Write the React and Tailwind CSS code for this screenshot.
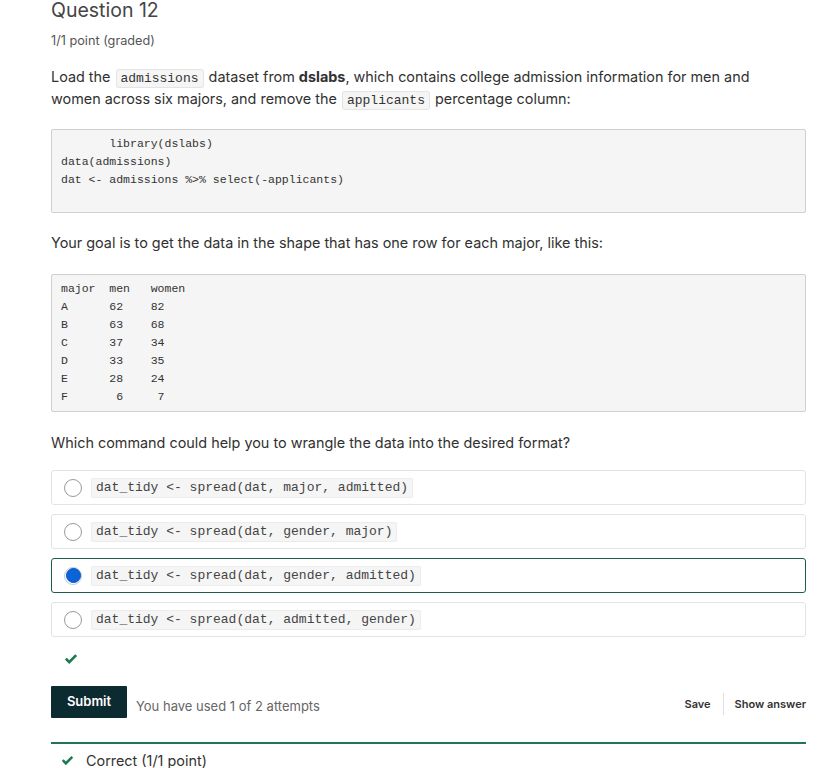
import React from 'react';

const mono = { fontFamily: '"Liberation Mono", "Courier New", monospace' };

const options = [
  'dat_tidy <- spread(dat, major, admitted)',
  'dat_tidy <- spread(dat, gender, major)',
  'dat_tidy <- spread(dat, gender, admitted)',
  'dat_tidy <- spread(dat, admitted, gender)',
];

function Check({ className }) {
  return (
    <svg viewBox="0 0 16 13" className={className} fill="currentColor">
      <path d="M1 7.2 L3.2 5 L6 7.8 L12.8 1 L15 3.2 L6 12.2 Z" />
    </svg>
  );
}

function InlineCode({ children }) {
  return (
    <code
      className="mx-[1px] rounded-[3px] border border-[#e4e4e4] bg-[#f5f5f5] px-[4px] py-[1px] text-[13px] leading-[14px] text-[#333]"
      style={mono}
    >
      {children}
    </code>
  );
}

function Option({ text, selected }) {
  return (
    <div
      className={
        'flex h-[35px] items-center rounded-[3px] border pl-[12px] ' +
        (selected ? 'border-[#1b5e50]' : 'border-[#e3e3e3]')
      }
    >
      {selected ? (
        <span className="flex h-[18px] w-[18px] items-center justify-center rounded-full border border-[#b8c9e6] bg-white">
          <span className="h-[15px] w-[15px] rounded-full border border-[#0b4fb8] bg-[#0a63d8]" />
        </span>
      ) : (
        <span className="h-[18px] w-[18px] rounded-full border border-[#9a9a9a] bg-white" />
      )}
      <span
        className="ml-[9px] rounded-[2px] border border-[#ececec] bg-[#f5f5f5] px-[4px] text-[13px] leading-[18px] text-[#444]"
        style={mono}
      >
        {text}
      </span>
    </div>
  );
}

export default function App() {
  return (
    <div
      className="min-h-[768px] w-[835px] overflow-hidden bg-white pl-[51px] pr-[29px] text-[#313131]"
      style={{ fontFamily: 'Inter, "Noto Sans", sans-serif' }}
    >
      <h2 className="text-[19.5px] leading-[21px] font-normal text-[#454545]">Question 12</h2>
      <div className="mt-[11px] text-[12.7px] leading-[18px] text-[#555]">1/1 point (graded)</div>

      <p className="mt-[16px] pr-[20px] text-[14.4px] leading-[22px]">
        Load the <InlineCode>admissions</InlineCode> dataset from <strong className="font-bold">dslabs</strong>,
        which contains college admission information for men and women across six majors, and remove the{' '}
        <InlineCode>applicants</InlineCode> percentage column:
      </p>

      <pre
        className="mt-[19px] rounded-[2px] border border-[#cfcfcf] bg-[#f5f5f5] px-[9px] pt-[5px] pb-[23px] text-[11.5px] leading-[18px] text-[#333]"
        style={mono}
      >
{`       library(dslabs)
data(admissions)
dat <- admissions %>% select(-applicants)`}
      </pre>

      <p className="mt-[19px] text-[14.4px] leading-[22px]">
        Your goal is to get the data in the shape that has one row for each major, like this:
      </p>

      <pre
        className="mt-[20px] rounded-[2px] border border-[#cfcfcf] bg-[#f5f5f5] px-[9px] py-[5px] text-[11.5px] leading-[18px] text-[#333]"
        style={mono}
      >
{`major  men   women
A      62    82
B      63    68
C      37    34
D      33    35
E      28    24
F       6     7`}
      </pre>

      <p className="mt-[20px] text-[14.4px] leading-[22px]">
        Which command could help you to wrangle the data into the desired format?
      </p>

      <div className="mt-[16px] flex flex-col gap-[9px]">
        {options.map((o, i) => (
          <Option key={o} text={o} selected={i === 2} />
        ))}
      </div>

      <div className="mt-[16px] h-[13px] pl-[13px]">
        <Check className="h-[12px] w-[14px] text-[#1c7a52]" />
      </div>

      <div className="mt-[20px] flex items-center">
        <button className="h-[32px] w-[76px] rounded-[1px] bg-[#0c2b30] text-[13px] font-semibold text-white">
          Submit
        </button>
        <span className="ml-[9px] mt-[10px] text-[13px] text-[#666]">You have used 1 of 2 attempts</span>
        <div className="ml-auto mt-[4px] flex items-center text-[11px] font-semibold text-[#333]">
          <span className="pr-[12px]">Save</span>
          <span className="h-[22px] w-px bg-[#e0e0e0]" />
          <span className="pl-[11px]">Show answer</span>
        </div>
      </div>

      <div className="mt-[24px] h-[2px] bg-[#1f7555]" />

      <div className="mt-[6px] flex items-center pl-[10px] text-[14.4px] text-[#333]">
        <Check className="h-[11px] w-[13px] text-[#1c7a52]" />
        <span className="ml-[12px]">Correct (1/1 point)</span>
      </div>
    </div>
  );
}
